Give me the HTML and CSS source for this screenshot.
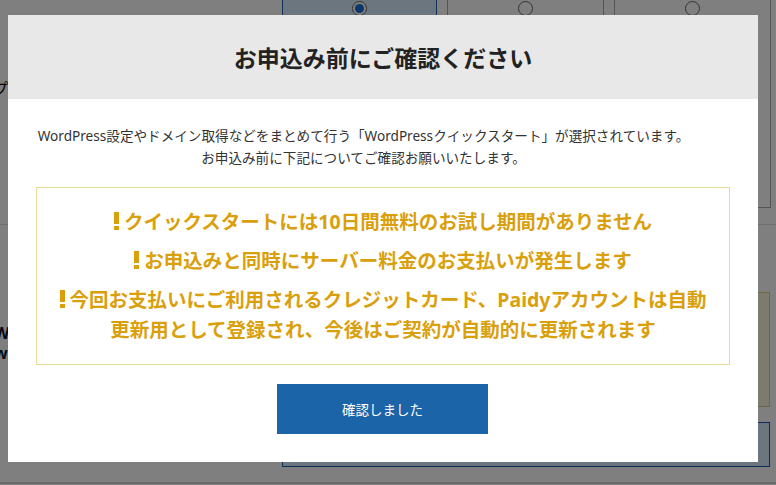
FILE: index.html
```html
<!DOCTYPE html>
<html lang="ja">
<head>
<meta charset="utf-8">
<title>お申込み前にご確認ください</title>
<link rel="stylesheet" href="styles.css">
</head>
<body>
<div class="page">
  <div class="plans">
    <div class="side-label">プ</div>
    <div class="plan plan-selected"><span class="radio radio-on"></span></div>
    <div class="plan"><span class="radio"></span></div>
    <div class="plan plan-last"><span class="radio"></span></div>
  </div>
  <div class="rule"></div>
  <div class="section">
    <div class="section-left">
      <div class="frag">W</div>
      <div class="frag">w</div>
    </div>
    <div class="section-right">
      <div class="note-box"></div>
      <div class="select-box"></div>
    </div>
  </div>
  <div class="rule rule-bottom"></div>
</div>

<div class="overlay">
  <div class="modal">
    <div class="modal-head">
      <h1 class="modal-title">お申込み前にご確認ください</h1>
    </div>
    <div class="modal-body">
      <p class="intro">WordPress設定やドメイン取得などをまとめて行う「WordPressクイックスタート」が選択されています。<br>お申込み前に下記についてご確認お願いいたします。</p>
      <div class="warn-box">
        <p class="warn"><span class="bang"></span>クイックスタートには10日間無料のお試し期間がありません</p>
        <p class="warn"><span class="bang"></span>お申込みと同時にサーバー料金のお支払いが発生します</p>
        <p class="warn"><span class="bang"></span>今回お支払いにご利用されるクレジットカード、Paidyアカウントは自動<br>更新用として登録され、今後はご契約が自動的に更新されます</p>
      </div>
      <div class="actions">
        <button class="confirm-btn" type="button">確認しました</button>
      </div>
    </div>
  </div>
</div>
</body>
</html>
```

FILE: styles.css
```css
html, body {
  margin: 0;
  padding: 0;
}
body {
  width: 776px;
  height: 485px;
  overflow: hidden;
  background: #ffffff;
  font-family: "Noto Sans", "Noto Sans CJK JP", sans-serif;
  position: relative;
}

/* background page (behind the dim overlay) */
.page {
  width: 776px;
  height: 485px;
}
.plans {
  display: flex;
  height: 218px;
  margin-top: -10px;
}
.side-label {
  width: 282px;
  flex: none;
  padding-top: 88px;
  margin-left: -7px;
  margin-right: 7px;
  font-size: 15px;
  line-height: 20px;
  color: #000;
  box-sizing: border-box;
}
.plan {
  width: 155px;
  flex: none;
  height: 218px;
  box-sizing: border-box;
  border: 1px solid #aaaaaa;
  margin-right: 10px;
  display: flex;
  justify-content: center;
  padding-top: 10px;
}
.plan + .plan {
  width: 157px;
}
.plan-last {
  margin-right: 0;
}
.plan-selected {
  background: #d8ecff;
  border-color: #2a60b8;
}
.radio {
  width: 15px;
  height: 15px;
  box-sizing: border-box;
  border: 1.5px solid #666;
  border-radius: 50%;
  background: #fff;
  display: flex;
  align-items: center;
  justify-content: center;
}
.radio-on::after {
  content: "";
  width: 9px;
  height: 9px;
  border-radius: 50%;
  background: #1a6fd8;
}
.rule {
  height: 1px;
  background: #dddddd;
  margin-top: 16px;
}
.section {
  display: flex;
  height: 257px;
}
.section-left {
  width: 282px;
  flex: none;
  box-sizing: border-box;
  padding-top: 98px;
  margin-left: -6px;
  margin-right: 6px;
  font-weight: 700;
  font-size: 16px;
  line-height: 20px;
  color: #0a1830;
}
.section-right {
  width: 488px;
  flex: none;
}
.note-box {
  margin-top: 67px;
  height: 115px;
  box-sizing: border-box;
  background: #f8f6dc;
  border: 1px solid #dccc8a;
}
.select-box {
  margin-top: 15px;
  height: 45px;
  box-sizing: border-box;
  background: #d8ecff;
  border: 1px solid #1c58b4;
}
.rule-bottom {
  margin-top: 0;
  background: #d4d4d4;
  height: 2px;
}

/* overlay + modal */
.overlay {
  position: absolute;
  inset: 0;
  background: rgba(0, 0, 0, 0.5);
}
.modal {
  margin: 15px 0 0 8px;
  width: 750px;
  height: 447px;
  background: #fff;
  font-family: "Noto Sans", "Noto Sans CJK JP", sans-serif;
}
.modal-head {
  height: 84px;
  background: #e8e8e8;
  display: flex;
  align-items: center;
  justify-content: center;
}
.modal-title {
  margin: 0;
  font-size: 23px;
  font-weight: 700;
  color: #222;
  letter-spacing: 0;
}
.modal-body {
  padding: 26px 28px 0 28px;
}
.intro {
  margin: 0 39px 0 0;
  text-align: center;
  font-size: 13.6px;
  line-height: 22px;
  color: #333;
}
.warn-box {
  margin-top: 18px;
  border: 1px solid #e8dd98;
  padding: 19px 10px;
  text-align: center;
}
.warn {
  margin: 0;
  font-size: 19.5px;
  line-height: 30px;
  font-weight: 700;
  color: #daa00c;
}
.warn + .warn {
  margin-top: 9px;
}
.bang {
  display: inline-block;
  width: 5px;
  height: 18px;
  margin-right: 5px;
  vertical-align: -1px;
  background:
    linear-gradient(#daa00c, #daa00c) top / 5px 12px no-repeat,
    linear-gradient(#daa00c, #daa00c) bottom / 5px 4px no-repeat;
}
.actions {
  display: flex;
  justify-content: center;
  margin-top: 19px;
}
.confirm-btn {
  width: 211px;
  height: 50px;
  border: none;
  background: #1b64a8;
  color: #fff;
  font-family: "Noto Sans", "Noto Sans CJK JP", sans-serif;
  font-size: 13.5px;
  padding: 0;
  margin-left: -1px;
}
```
